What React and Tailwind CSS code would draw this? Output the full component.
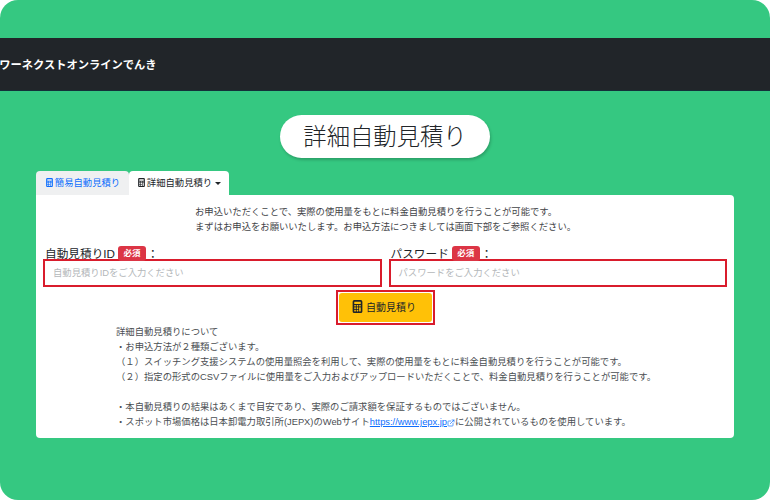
import { ExternalLink } from 'lucide-react';
import { BsCalculatorFill } from 'react-icons/bs';

const font = { fontFamily: '"Liberation Sans", "Noto Sans CJK JP", sans-serif' };

function Field({ label, placeholder }) {
  return (
    <div className="min-w-0">
      <div className="flex h-[14px] items-center pl-[2px] pt-[3px] text-[11.67px] leading-none text-[#212529]">
        {label}
        <span className="relative z-10 ml-[3px] flex h-[15px] w-[28px] items-center justify-center rounded-[3px] bg-[#dc3545] text-[8.5px] font-bold text-white">必須</span>
        <span className="ml-[1px]">：</span>
      </div>
      <div className="flex h-[28px] items-center border-2 border-[#d91c2c] bg-white px-[8px] pt-px text-[9.33px] text-[#b4b7ba]">
        {placeholder}
      </div>
    </div>
  );
}

export default function App() {
  return (
    <div className="h-[500px] w-[770px] overflow-hidden bg-white" style={font}>
      <div className="flex h-[500px] flex-col rounded-[18px] bg-[#35c881] pt-[38px]">
        <nav className="flex h-[53px] shrink-0 items-center overflow-hidden border-b border-[#14303a] bg-[#212529] pt-[2px]">
          <span className="ml-[-12px] whitespace-nowrap text-[11.25px] font-bold text-white">パワーネクストオンラインでんき</span>
        </nav>

        <div className="mt-[24px] flex justify-center">
          <h1 className="flex h-[43px] w-[210px] items-center justify-center rounded-full bg-white pt-[2px] text-[23.33px] font-light text-[#212529] shadow-[1px_2px_3px_rgba(0,0,0,0.2)]">
            詳細自動見積り
          </h1>
        </div>

        <div className="mx-[36px] mt-[13px] w-[698px]">
          <div className="flex h-[24px] text-[9.33px]">
            <div className="flex w-[93px] items-center justify-center gap-[1px] rounded-t-[4px] bg-[#eff0f1] pt-[2px] text-[#0d6efd]">
              <BsCalculatorFill size={9} className="-mt-[3px]" />
              簡易自動見積り
            </div>
            <div className="flex w-[100px] items-center justify-center gap-[1px] rounded-t-[4px] bg-white pt-[2px] text-[#212529]">
              <BsCalculatorFill size={9} className="-mt-[3px]" />
              詳細自動見積り
              <span className="-mt-[2px] ml-[2px] h-0 w-0 border-x-[3px] border-t-[3px] border-x-transparent border-t-[#212529]" />
            </div>
          </div>

          <div className="h-[243px] rounded-b-[4px] rounded-tr-[4px] bg-white px-[7px] pt-[10px]">
            <div className="pl-[152px] text-[9.33px] leading-[15px] text-[#3f4347]">
              <p>お申込いただくことで、実際の使用量をもとに料金自動見積りを行うことが可能です。</p>
              <p>まずはお申込をお願いいたします。お申込方法につきましては画面下部をご参照ください。</p>
            </div>

            <div className="mt-[10px] grid grid-cols-2 gap-[7px]">
              <Field label="自動見積りID" placeholder="自動見積りIDをご入力ください" />
              <Field label="パスワード" placeholder="パスワードをご入力ください" />
            </div>

            <div className="mt-[3px] flex justify-center">
              <button className="h-[35px] w-[99px] border-2 border-[#d91c2c] bg-white p-px">
                <span className="flex h-full items-center justify-center gap-[2px] rounded-[3px] bg-[#ffc107] pr-[3px] text-[10px] text-[#212529]">
                  <BsCalculatorFill size={13} className="-mt-[2px]" />
                  自動見積り
                </span>
              </button>
            </div>

            <div className="pl-[73px] text-[9.33px] leading-[15px] text-[#4a4e52]">
              <p>詳細自動見積りについて</p>
              <p>・お申込方法が２種類ございます。</p>
              <p>（１）スイッチング支援システムの使用量照会を利用して、実際の使用量をもとに料金自動見積りを行うことが可能です。</p>
              <p>（２）指定の形式のCSVファイルに使用量をご入力およびアップロードいただくことで、料金自動見積りを行うことが可能です。</p>
              <p className="h-[15px]" />
              <p>・本自動見積りの結果はあくまで目安であり、実際のご請求額を保証するものではございません。</p>
              <p>
                ・スポット市場価格は日本卸電力取引所(JEPX)のWebサイト
                <a href="#" className="text-[#0d6efd] underline">https://www.jepx.jp</a>
                <ExternalLink size={8} className="inline text-[#0d6efd]" />
                に公開されているものを使用しています。
              </p>
            </div>
          </div>
        </div>
      </div>
    </div>
  );
}
